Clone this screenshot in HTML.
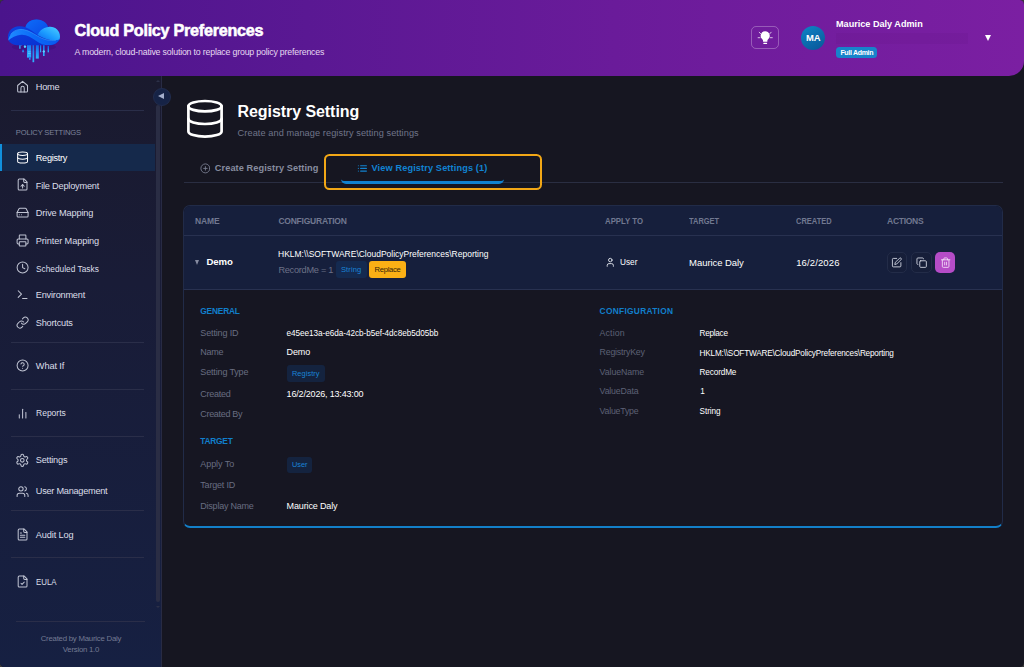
<!DOCTYPE html>
<html lang="en">
<head>
<meta charset="utf-8">
<title>Cloud Policy Preferences - Registry Setting</title>
<style>
*{box-sizing:border-box;margin:0;padding:0}
html,body{width:1024px;height:667px;overflow:hidden;background:#3a3a3a;font-family:"Liberation Sans",sans-serif;color:#fff}
.abs,.t{position:absolute}
.t{white-space:nowrap;line-height:1;font-size:9px}
#win{position:absolute;left:0;top:0;width:1024px;height:667px;background:#161621;border-radius:4.5px;overflow:hidden}
#hdr{position:absolute;left:0;top:0;width:1024px;height:75.5px;background:linear-gradient(90deg,#4a148c 0%,#5a1893 30%,#6a1b9a 60%,#7b1fa2 100%);border-radius:0 0 15px 0}
#side{position:absolute;left:0;top:75px;width:161.5px;height:592px;background:linear-gradient(180deg,#1a1a2e 0%,#191c37 35%,#162042 100%);border-right:1px solid #282b44}
.ni{width:13.2px;height:13.2px;fill:none;stroke-width:1.85;stroke-linecap:round;stroke-linejoin:round}
.dv{position:absolute;left:11px;width:133px;height:1px;background:#2a2e49}
.ib{position:absolute;fill:none;stroke:#fff;stroke-width:1.8;stroke-linecap:round;stroke-linejoin:round}
</style>
</head>
<body>
<div id="win">

<!-- sidebar -->
<div id="side"></div>
<div class="abs" style="left:0;top:143.8px;width:154.5px;height:27.7px;background:#15294b;border-left:2px solid #1190dc"></div>
<div class="dv" style="top:109.9px"></div><div class="dv" style="top:342.1px"></div><div class="dv" style="top:389px"></div><div class="dv" style="top:436.1px"></div><div class="dv" style="top:509.9px"></div><div class="dv" style="top:557.2px"></div>
<div class="dv" style="top:620.8px;left:16px;width:129px"></div>
<svg class="abs ni" style="left:15.5px;top:80.2px;stroke:#c0c4d3" viewBox="0 0 24 24"><path d="M3 10 12 2.3l9 7.7v10a2 2 0 0 1-2 2H5a2 2 0 0 1-2-2z"/><path d="M9 22v-7.5a3 3 0 0 1 6 0V22"/></svg>
<svg class="abs ni" style="left:15.5px;top:151px;stroke:#fff" viewBox="0 0 24 24"><ellipse cx="12" cy="5" rx="9" ry="3"/><path d="M3 5v14a9 3 0 0 0 18 0V5"/><path d="M3 12a9 3 0 0 0 18 0"/></svg>
<svg class="abs ni" style="left:15.5px;top:178.4px;stroke:#c0c4d3" viewBox="0 0 24 24"><path d="M15 2H6a2 2 0 0 0-2 2v16a2 2 0 0 0 2 2h12a2 2 0 0 0 2-2V7z"/><path d="M14 2v4a2 2 0 0 0 2 2h4"/><path d="M12 12v6"/><path d="m15 15-3-3-3 3"/></svg>
<svg class="abs ni" style="left:15.5px;top:206.1px;stroke:#c0c4d3" viewBox="0 0 24 24"><path d="M22 12H2"/><path d="M5.45 5.11 2 12v6a2 2 0 0 0 2 2h16a2 2 0 0 0 2-2v-6l-3.45-6.89A2 2 0 0 0 16.76 4H7.24a2 2 0 0 0-1.79 1.11z"/><path d="M6 16h.01"/><path d="M10 16h.01"/></svg>
<svg class="abs ni" style="left:15.5px;top:233.7px;stroke:#c0c4d3" viewBox="0 0 24 24"><path d="M6 18H4a2 2 0 0 1-2-2v-5a2 2 0 0 1 2-2h16a2 2 0 0 1 2 2v5a2 2 0 0 1-2 2h-2"/><path d="M6 9V3a1 1 0 0 1 1-1h10a1 1 0 0 1 1 1v6"/><rect x="6" y="14" width="12" height="8" rx="1"/></svg>
<svg class="abs ni" style="left:15.5px;top:261.1px;stroke:#c0c4d3" viewBox="0 0 24 24"><circle cx="12" cy="12" r="10"/><path d="M12 6v6l4 2"/></svg>
<svg class="abs ni" style="left:15.5px;top:288.4px;stroke:#c0c4d3" viewBox="0 0 24 24"><path d="m4 17 6-6-6-6"/><path d="M12 19h8"/></svg>
<svg class="abs ni" style="left:15.5px;top:316.2px;stroke:#c0c4d3" viewBox="0 0 24 24"><path d="M10 13a5 5 0 0 0 7.54.540l3-3a5 5 0 0 0-7.07-7.07l-1.72 1.71"/><path d="M14 11a5 5 0 0 0-7.54-.540l-3 3a5 5 0 0 0 7.07 7.07l1.71-1.71"/></svg>
<svg class="abs ni" style="left:15.5px;top:359.3px;stroke:#c0c4d3" viewBox="0 0 24 24"><circle cx="12" cy="12" r="10"/><path d="M9.09 9a3 3 0 0 1 5.83 1c0 2-3 3-3 3"/><path d="M12 17h.01"/></svg>
<svg class="abs ni" style="left:15.5px;top:406.7px;stroke:#c0c4d3" viewBox="0 0 24 24"><path d="M18 20V10"/><path d="M12 20V4"/><path d="M6 20v-6"/></svg>
<svg class="abs ni" style="left:14.8px;top:453.1px;width:14.6px;height:14.6px;stroke-width:1.7;stroke:#c0c4d3" viewBox="0 0 24 24"><path d="M12.22 2h-.44a2 2 0 0 0-2 2v.180a2 2 0 0 1-1 1.73l-.43.25a2 2 0 0 1-2 0l-.15-.080a2 2 0 0 0-2.73.730l-.22.38a2 2 0 0 0 .730 2.73l.150.1a2 2 0 0 1 1 1.72v.510a2 2 0 0 1-1 1.74l-.150.09a2 2 0 0 0-.730 2.73l.220.38a2 2 0 0 0 2.73.730l.150-.080a2 2 0 0 1 2 0l.430.25a2 2 0 0 1 1 1.73V20a2 2 0 0 0 2 2h.440a2 2 0 0 0 2-2v-.180a2 2 0 0 1 1-1.73l.430-.250a2 2 0 0 1 2 0l.150.08a2 2 0 0 0 2.73-.730l.220-.390a2 2 0 0 0-.730-2.73l-.150-.080a2 2 0 0 1-1-1.74v-.500a2 2 0 0 1 1-1.74l.150-.090a2 2 0 0 0 .730-2.73l-.220-.380a2 2 0 0 0-2.73-.730l-.150.08a2 2 0 0 1-2 0l-.430-.250a2 2 0 0 1-1-1.73V4a2 2 0 0 0-2-2z"/><circle cx="12" cy="12" r="3"/></svg>
<svg class="abs ni" style="left:15.5px;top:484.7px;stroke:#c0c4d3" viewBox="0 0 24 24"><path d="M16 21v-2a4 4 0 0 0-4-4H6a4 4 0 0 0-4 4v2"/><circle cx="9" cy="7" r="4"/><path d="M22 21v-2a4 4 0 0 0-3-3.87"/><path d="M16 3.13a4 4 0 0 1 0 7.75"/></svg>
<svg class="abs ni" style="left:15.5px;top:527.9px;stroke:#c0c4d3" viewBox="0 0 24 24"><path d="M15 2H6a2 2 0 0 0-2 2v16a2 2 0 0 0 2 2h12a2 2 0 0 0 2-2V7z"/><path d="M14 2v4a2 2 0 0 0 2 2h4"/><path d="M10 9H8"/><path d="M16 13H8"/><path d="M16 17H8"/></svg>
<svg class="abs ni" style="left:15.5px;top:575.2px;stroke:#c0c4d3" viewBox="0 0 24 24"><path d="M15 2H6a2 2 0 0 0-2 2v16a2 2 0 0 0 2 2h12a2 2 0 0 0 2-2V7z"/><path d="M14 2v4a2 2 0 0 0 2 2h4"/><path d="m9 15 2 2 4-4"/></svg>
<div class="abs" style="left:156.2px;top:105px;width:4px;height:497px;background:#2a2d44;border-radius:2px"></div>
<div class="abs" style="left:156.2px;top:79.5px;width:0;height:0;border-left:2px solid transparent;border-right:2px solid transparent;border-bottom:2.5px solid #2c3048"></div>
<div class="abs" style="left:156.2px;top:605.5px;width:0;height:0;border-left:2px solid transparent;border-right:2px solid transparent;border-top:2.5px solid #2c3048"></div>

<!-- header -->
<div id="hdr"></div>
<svg class="abs" style="left:0;top:0" width="70" height="70" viewBox="0 0 70 70">
  <defs>
    <linearGradient id="lg1" x1="0" y1="0" x2="1" y2="1"><stop offset="0" stop-color="#0b46e6"/><stop offset="1" stop-color="#0a2ccb"/></linearGradient>
    <linearGradient id="lg2" x1="0" y1="0" x2="1" y2="1"><stop offset="0" stop-color="#0d6cf8"/><stop offset="1" stop-color="#0a4ae6"/></linearGradient>
    <linearGradient id="lg3" x1="1" y1="0" x2="0" y2="1"><stop offset="0" stop-color="#4fd2ff"/><stop offset=".55" stop-color="#1c9cff"/><stop offset="1" stop-color="#0a64f0"/></linearGradient>
    <linearGradient id="lg4" x1="0" y1="0" x2="1" y2="0"><stop offset="0" stop-color="#1f8cff"/><stop offset=".5" stop-color="#0a6af6"/><stop offset="1" stop-color="#0b58ee"/></linearGradient>
    <linearGradient id="lg5" x1="0" y1="0" x2="0" y2="1"><stop offset="0" stop-color="#0c5cf0"/><stop offset="1" stop-color="#2fb4ff"/></linearGradient>
  </defs>
  <ellipse cx="34" cy="47" rx="22" ry="4" fill="#3a0f78" opacity=".5"/>
  <g fill="url(#lg5)">
    <rect x="19.2" y="41" width="1.4" height="7.7"/><rect x="22.3" y="49.6" width="1.5" height="2.6"/><rect x="24.2" y="40" width="1.3" height="8"/>
    <rect x="27" y="39" width="4.2" height="18.6"/><rect x="29" y="56.8" width="1.6" height="2.8"/><rect x="32.5" y="41" width="1.7" height="21.2"/>
    <rect x="35.8" y="43" width="3" height="15.6"/><rect x="40" y="43" width="1.2" height="9.3"/><rect x="43" y="42" width="1.6" height="14"/><rect x="47.6" y="46" width="1.4" height="6.3"/>
  </g>
  <g fill="#5fd4ff"><rect x="24" y="45.6" width="2" height="2" transform="rotate(45 25 46.6)"/><rect x="42.8" y="50.5" width="2" height="2" transform="rotate(45 43.8 51.5)"/><rect x="28" y="51.5" width="2.6" height=".7"/><rect x="28" y="53" width="2.6" height=".7"/></g>
  <circle cx="21.2" cy="43.8" r="1.3" fill="none" stroke="#4cc4ff" stroke-width=".7"/>
  <path d="M7.9 37.5C7.9 31 12.5 26.5 19 26.3c2.5-.1 4.5.3 6.5 1C26.5 22.5 31 19.5 36.5 19.5S46.5 22.5 48 26.8C54.5 26 60 30.5 60 36.5c0 5.5-5 8.8-11 8.8H19c-7 0-11.1-3.3-11.1-7.8z" fill="url(#lg1)"/>
  <path d="M25.5 27.3C26.5 22.5 31 19.5 36.5 19.5S46.5 22.5 48 26.8c-5 1-8.5 4-10.5 8.2-4-3-8-6.2-12-7.7z" fill="url(#lg2)"/>
  <path d="M37.5 35c2-4.5 6-7.5 11-8C54.5 26 60 30.5 60 36.5c0 1.2-.2 2.3-.7 3.3-6 1.7-14 0-21.8-4.8z" fill="url(#lg3)"/>
  <path d="M8.3 40.5c.7-5.8 5.2-10.6 11.7-11.1 6-.4 12.5 3.6 17.5 6.6 7 4.2 15 5.6 21.8 3.6-1.7 3.5-5.8 5.7-10.3 5.7-5 0-9-1.5-13-4.5-5-3.7-10-6.5-15-6-5 .5-9.7 3.2-12.7 5.7z" fill="url(#lg4)"/><path d="M10.5 34.5c2.5-3.2 5.8-4.9 9.5-5.1 6-.4 12.5 3.6 17.5 6.6 6 3.6 12.5 5.1 18.5 4.3" fill="none" stroke="#49b4ff" stroke-opacity=".55" stroke-width=".8"/>
</svg>
<div class="abs" style="left:751.1px;top:26.2px;width:28px;height:23px;border:1px solid rgba(255,255,255,.28);border-radius:5px"></div>
<svg class="abs" style="left:757px;top:29px" width="17" height="17" viewBox="757 29 17 17"><path d="M765.2 31.2a4.5 4.5 0 0 0-2.9 7.95c.5.45.75 1 .75 1.6v.950h4.3v-.950c0-.6.25-1.15.75-1.6a4.5 4.5 0 0 0-2.9-7.95z" fill="#fff"/><rect x="763.3" y="42.8" width="3.8" height="1.1" rx=".5" fill="#fff"/><path d="M758.1 37.7h1.9M770.4 37.7h1.9M759.2 32.2l1.5 1.6M771.2 32.2l-1.5 1.6" stroke="#fff" stroke-opacity=".85" stroke-width=".85" stroke-linecap="round"/></svg>
<div class="abs" style="left:800.9px;top:25.5px;width:24.6px;height:24.6px;border-radius:50%;background:linear-gradient(150deg,#0c80c2 10%,#0a5a9c 90%)"></div>
<div class="abs" style="left:836px;top:33px;width:132px;height:11px;background:rgba(50,5,80,.05)"></div>
<div class="abs" style="left:836.2px;top:47.3px;width:40.9px;height:10.7px;border-radius:3.5px;background:#1783cb"></div>
<div class="abs" style="left:984.8px;top:34.6px;width:0;height:0;border-left:3.3px solid transparent;border-right:3.3px solid transparent;border-top:6px solid #fff"></div>

<!-- collapse button -->
<div class="abs" style="left:152.6px;top:87.6px;width:18px;height:18px;border-radius:50%;background:#162346;border:1px solid #212c4d"></div>
<div class="abs" style="left:158px;top:92.9px;width:0;height:0;border-top:3.7px solid transparent;border-bottom:3.7px solid transparent;border-right:6.5px solid #a4afcc"></div>

<!-- page heading icon -->
<svg class="abs" style="left:184px;top:96px" width="42" height="46" viewBox="184 96 42 46" fill="none" stroke="#fff" stroke-width="2.7" stroke-linecap="round" stroke-linejoin="round"><ellipse cx="205" cy="106.2" rx="16.6" ry="5.2"/><path d="M188.4 106.2v25.2a16.6 5.2 0 0 0 33.2 0v-25.2"/><path d="M188.4 118.8a16.6 5.2 0 0 0 33.2 0"/></svg>

<!-- tabs -->
<div class="abs" style="left:183.5px;top:182.4px;width:819px;height:1px;background:#2a2e42"></div>
<svg class="abs" style="left:199.6px;top:162.8px;width:10.8px;height:10.8px" viewBox="0 0 24 24" fill="none" stroke="#7f8497" stroke-width="1.9" stroke-linecap="round"><circle cx="12" cy="12" r="10"/><path d="M12 8v8M8 12h8"/></svg>
<div class="abs" style="left:340.5px;top:155px;width:163.5px;height:28.6px;border-bottom:3px solid #1282cf;border-radius:0 0 5px 5px"></div>
<div class="abs" style="left:324.4px;top:154px;width:217.6px;height:36px;border:2px solid #f2a716;border-radius:5.5px"></div>
<svg class="abs" style="left:356.5px;top:162.8px;width:10.8px;height:10.8px" viewBox="0 0 24 24" fill="none" stroke="#1282cf" stroke-width="2.4" stroke-linecap="round"><path d="M8 6h13M8 12h13M8 18h13M3 6h.01M3 12h.01M3 18h.01"/></svg>

<!-- table card -->
<div class="abs" style="left:183.4px;top:205px;width:819.4px;height:323px;border:1px solid #212b48;border-bottom:2.4px solid #137fc8;border-radius:7px;background:#161622;overflow:hidden">
  <div class="abs" style="left:0;top:0;width:819px;height:30px;background:#161f3c;border-bottom:1px solid #283150"></div>
  <div class="abs" style="left:0;top:30px;width:819px;height:53.8px;background:#161f3c;border-bottom:1px solid #283150"></div>
</div>
<div class="abs" style="left:194.8px;top:259.8px;width:0;height:0;border-left:2.8px solid transparent;border-right:2.8px solid transparent;border-top:5px solid #868ca1"></div>
<div class="abs" style="left:335.6px;top:261.4px;width:31.2px;height:16.5px;border-radius:3px;background:#142a50"></div>
<div class="abs" style="left:368.9px;top:261px;width:37.3px;height:17px;border-radius:3px;background:#fbb015"></div>
<svg class="abs" style="left:604.8px;top:257px;width:10.6px;height:10.6px" viewBox="0 0 24 24" fill="none" stroke="#e3e6ee" stroke-width="2.1" stroke-linecap="round" stroke-linejoin="round"><path d="M19 21v-2a4 4 0 0 0-4-4H9a4 4 0 0 0-4 4v2"/><circle cx="12" cy="7" r="4"/></svg>

<div class="abs" style="left:887.1px;top:252px;width:20.4px;height:20.7px;border-radius:5px;background:#161e39;border:1px solid #232c48"></div>
<svg class="ib" style="left:891.4px;top:256.6px;width:11.3px;height:11.3px;stroke:#dde0ec" viewBox="0 0 24 24"><path d="M12 3H5a2 2 0 0 0-2 2v14a2 2 0 0 0 2 2h14a2 2 0 0 0 2-2v-7"/><path d="M18.375 2.625a2.121 2.121 0 1 1 3 3L12 15l-4 1 1-4z"/></svg>
<div class="abs" style="left:911.3px;top:252px;width:20.4px;height:20.7px;border-radius:5px;background:#161e39;border:1px solid #232c48"></div>
<svg class="ib" style="left:915.8px;top:256.7px;width:11.3px;height:11.3px;stroke:#dde0ec" viewBox="0 0 24 24"><rect x="8" y="8" width="14" height="14" rx="2"/><path d="M4 16c-1.1 0-2-.9-2-2V4c0-1.1.9-2 2-2h10c1.1 0 2 .9 2 2"/></svg>
<div class="abs" style="left:935.2px;top:252px;width:19.4px;height:20.6px;border-radius:5px;background:#b54cc7"></div>
<svg class="ib" style="left:939.5px;top:256.6px;width:11.3px;height:11.3px;stroke:#f6e4f9" viewBox="0 0 24 24"><path d="M3 6h18"/><path d="M19 6v14a2 2 0 0 1-2 2H7a2 2 0 0 1-2-2V6"/><path d="M8 6V4a2 2 0 0 1 2-2h4a2 2 0 0 1 2 2v2"/><path d="M10 11v6M14 11v6"/></svg>

<div class="abs" style="left:286.6px;top:365.3px;width:38.3px;height:16.5px;border-radius:3px;background:#14233f"></div>
<div class="abs" style="left:286.6px;top:456.8px;width:25.1px;height:16.5px;border-radius:3px;background:#14233f"></div>

<div class="t" style="left:74.6px;top:22.44px;font-size:16.2px;letter-spacing:-0.276px;font-weight:bold;-webkit-text-stroke:.55px #fff">Cloud Policy Preferences</div>
<div class="t" style="left:74.6px;top:48.05px;font-size:8.8px;letter-spacing:-0.194px;color:#e6daf1">A modern, cloud-native solution to replace group policy preferences</div>
<div class="t" style="left:805.9px;top:34.25px;font-size:9px;transform:scaleX(1.0500);transform-origin:0 0;font-weight:bold">MA</div>
<div class="t" style="left:836.2px;top:19.06px;font-size:9.8px;transform:scaleX(0.9294);transform-origin:0 0;font-weight:bold">Maurice Daly Admin</div>
<div class="t" style="left:840.4px;top:49.23px;font-size:7px;letter-spacing:-0.311px;font-weight:bold">Full Admin</div>
<div class="t" style="left:35.8px;top:83.16px;font-size:9.2px;letter-spacing:-0.229px;color:#dcdfe9">Home</div>
<div class="t" style="left:35.8px;top:153.96px;font-size:9.2px;letter-spacing:-0.313px;color:#fff">Registry</div>
<div class="t" style="left:35.8px;top:182.36px;font-size:9.2px;letter-spacing:-0.206px;color:#dcdfe9">File Deployment</div>
<div class="t" style="left:35.8px;top:209.06px;font-size:9.2px;letter-spacing:-0.133px;color:#dcdfe9">Drive Mapping</div>
<div class="t" style="left:35.8px;top:236.66px;font-size:9.2px;letter-spacing:-0.104px;color:#dcdfe9">Printer Mapping</div>
<div class="t" style="left:35.8px;top:265.06px;font-size:9.2px;transform:scaleX(0.9062);transform-origin:0 0;color:#dcdfe9">Scheduled Tasks</div>
<div class="t" style="left:35.8px;top:291.36px;font-size:9.2px;letter-spacing:-0.216px;color:#dcdfe9">Environment</div>
<div class="t" style="left:35.8px;top:319.16px;font-size:9.2px;letter-spacing:-0.224px;color:#dcdfe9">Shortcuts</div>
<div class="t" style="left:35.8px;top:361.56px;font-size:9.2px;letter-spacing:-0.087px;color:#dcdfe9">What If</div>
<div class="t" style="left:35.8px;top:408.66px;font-size:9.2px;transform:scaleX(0.9263);transform-origin:0 0;color:#dcdfe9">Reports</div>
<div class="t" style="left:35.8px;top:455.66px;font-size:9.2px;letter-spacing:-0.213px;color:#dcdfe9">Settings</div>
<div class="t" style="left:35.8px;top:486.66px;font-size:9.2px;letter-spacing:-0.265px;color:#dcdfe9">User Management</div>
<div class="t" style="left:35.8px;top:530.86px;font-size:9.2px;letter-spacing:-0.136px;color:#dcdfe9">Audit Log</div>
<div class="t" style="left:35.8px;top:578.16px;font-size:9.2px;transform:scaleX(0.8578);transform-origin:0 0;color:#dcdfe9">EULA</div>
<div class="t" style="left:15.8px;top:128.94px;font-size:7.6px;letter-spacing:-0.188px;color:#7d849c">POLICY SETTINGS</div>
<div class="t" style="left:40.7px;top:634.54px;font-size:7.8px;letter-spacing:-0.231px;color:#737a93">Created by Maurice Daly</div>
<div class="t" style="left:62.8px;top:646.14px;font-size:7.8px;letter-spacing:-0.247px;color:#737a93">Version 1.0</div>
<div class="t" style="left:237.5px;top:104.13px;font-size:16px;letter-spacing:-0.062px;font-weight:bold">Registry Setting</div>
<div class="t" style="left:237.6px;top:129.46px;font-size:9.2px;letter-spacing:0.081px;color:#70758a">Create and manage registry setting settings</div>
<div class="t" style="left:214.8px;top:164.46px;font-size:9.2px;letter-spacing:0.091px;font-weight:bold;color:#878c9f">Create Registry Setting</div>
<div class="t" style="left:371.5px;top:164.46px;font-size:9.2px;letter-spacing:0.124px;font-weight:bold;color:#1183d2">View Registry Settings (1)</div>
<div class="t" style="left:195px;top:216.5px;font-size:8.5px;letter-spacing:-0.158px;color:#717890;font-weight:bold">NAME</div>
<div class="t" style="left:278.4px;top:216.5px;font-size:8.5px;letter-spacing:-0.22px;color:#717890;font-weight:bold">CONFIGURATION</div>
<div class="t" style="left:605px;top:216.5px;font-size:8.5px;transform:scaleX(0.9174);transform-origin:0 0;color:#717890;font-weight:bold">APPLY TO</div>
<div class="t" style="left:689.1px;top:216.5px;font-size:8.5px;transform:scaleX(0.8772);transform-origin:0 0;color:#717890;font-weight:bold">TARGET</div>
<div class="t" style="left:796.2px;top:216.5px;font-size:8.5px;transform:scaleX(0.8822);transform-origin:0 0;color:#717890;font-weight:bold">CREATED</div>
<div class="t" style="left:887.1px;top:216.5px;font-size:8.5px;letter-spacing:-0.293px;color:#717890;font-weight:bold">ACTIONS</div>
<div class="t" style="left:206.5px;top:257.46px;font-size:9.6px;letter-spacing:-0.089px;font-weight:bold">Demo</div>
<div class="t" style="left:278.4px;top:250.46px;font-size:9.2px;transform:scaleX(0.9232);transform-origin:0 0;">HKLM:\\SOFTWARE\CloudPolicyPreferences\Reporting</div>
<div class="t" style="left:278.4px;top:265.96px;font-size:9.2px;letter-spacing:-0.272px;color:#6c7187">RecordMe = 1</div>
<div class="t" style="left:341px;top:265.74px;font-size:7.6px;letter-spacing:0.059px;color:#1a84d6">String</div>
<div class="t" style="left:374.5px;top:265.74px;font-size:7.6px;letter-spacing:-0.254px;color:#33250a">Replace</div>
<div class="t" style="left:619.8px;top:256.81px;font-size:9.5px;transform:scaleX(0.8673);transform-origin:0 0;">User</div>
<div class="t" style="left:689.1px;top:257.81px;font-size:9.5px;letter-spacing:-0.061px;">Maurice Daly</div>
<div class="t" style="left:796.2px;top:257.81px;font-size:9.5px;letter-spacing:0.126px;">16/2/2026</div>
<div class="t" style="left:200.3px;top:307.25px;font-size:8.4px;letter-spacing:-0.222px;font-weight:bold;color:#117fcb">GENERAL</div>
<div class="t" style="left:200.3px;top:329.15px;font-size:9px;letter-spacing:-0.143px;color:#686d81">Setting ID</div>
<div class="t" style="left:286.6px;top:329.74px;font-size:8.2px;letter-spacing:-0.051px;">e45ee13a-e6da-42cb-b5ef-4dc8eb5d05bb</div>
<div class="t" style="left:200.3px;top:347.85px;font-size:9px;letter-spacing:-0.279px;color:#686d81">Name</div>
<div class="t" style="left:286.6px;top:347.85px;font-size:9px;letter-spacing:-0.154px;">Demo</div>
<div class="t" style="left:200.3px;top:368.25px;font-size:9px;letter-spacing:-0.156px;color:#686d81">Setting Type</div>
<div class="t" style="left:291.9px;top:370.34px;font-size:7.4px;letter-spacing:0.074px;color:#1a84d6">Registry</div>
<div class="t" style="left:200.3px;top:390.35px;font-size:9px;letter-spacing:-0.262px;color:#686d81">Created</div>
<div class="t" style="left:286.6px;top:390.35px;font-size:9px;letter-spacing:-0.178px;">16/2/2026, 13:43:00</div>
<div class="t" style="left:200.3px;top:410.15px;font-size:9px;letter-spacing:-0.313px;color:#686d81">Created By</div>
<div class="t" style="left:200.3px;top:436.85px;font-size:8.4px;letter-spacing:-0.269px;font-weight:bold;color:#117fcb">TARGET</div>
<div class="t" style="left:200.3px;top:459.85px;font-size:9px;letter-spacing:-0.07px;color:#686d81">Apply To</div>
<div class="t" style="left:291.9px;top:460.94px;font-size:7.4px;color:#1a84d6">User</div>
<div class="t" style="left:200.3px;top:480.95px;font-size:9px;letter-spacing:-0.191px;color:#686d81">Target ID</div>
<div class="t" style="left:200.3px;top:501.65px;font-size:9px;letter-spacing:-0.228px;color:#686d81">Display Name</div>
<div class="t" style="left:286.6px;top:501.65px;font-size:9px;letter-spacing:-0.143px;">Maurice Daly</div>
<div class="t" style="left:599.6px;top:307.25px;font-size:8.4px;letter-spacing:0.276px;font-weight:bold;color:#117fcb">CONFIGURATION</div>
<div class="t" style="left:599.6px;top:329.25px;font-size:8.8px;letter-spacing:0.124px;color:#5d6175">Action</div>
<div class="t" style="left:699.6px;top:329.54px;font-size:8.2px;letter-spacing:-0.278px;">Replace</div>
<div class="t" style="left:599.6px;top:347.85px;font-size:8.8px;letter-spacing:-0.211px;color:#5d6175">RegistryKey</div>
<div class="t" style="left:699.6px;top:350.14px;font-size:8.2px;letter-spacing:-0.187px;">HKLM:\\SOFTWARE\CloudPolicyPreferences\Reporting</div>
<div class="t" style="left:599.6px;top:368.45px;font-size:8.8px;letter-spacing:-0.09px;color:#5d6175">ValueName</div>
<div class="t" style="left:699.6px;top:368.74px;font-size:8.2px;letter-spacing:-0.135px;">RecordMe</div>
<div class="t" style="left:599.6px;top:386.75px;font-size:8.8px;letter-spacing:-0.182px;color:#5d6175">ValueData</div>
<div class="t" style="left:700.2px;top:388.04px;font-size:8.2px;">1</div>
<div class="t" style="left:599.6px;top:406.95px;font-size:8.8px;letter-spacing:-0.236px;color:#5d6175">ValueType</div>
<div class="t" style="left:699.6px;top:408.24px;font-size:8.2px;letter-spacing:-0.098px;">String</div>

</div>
</body>
</html>
